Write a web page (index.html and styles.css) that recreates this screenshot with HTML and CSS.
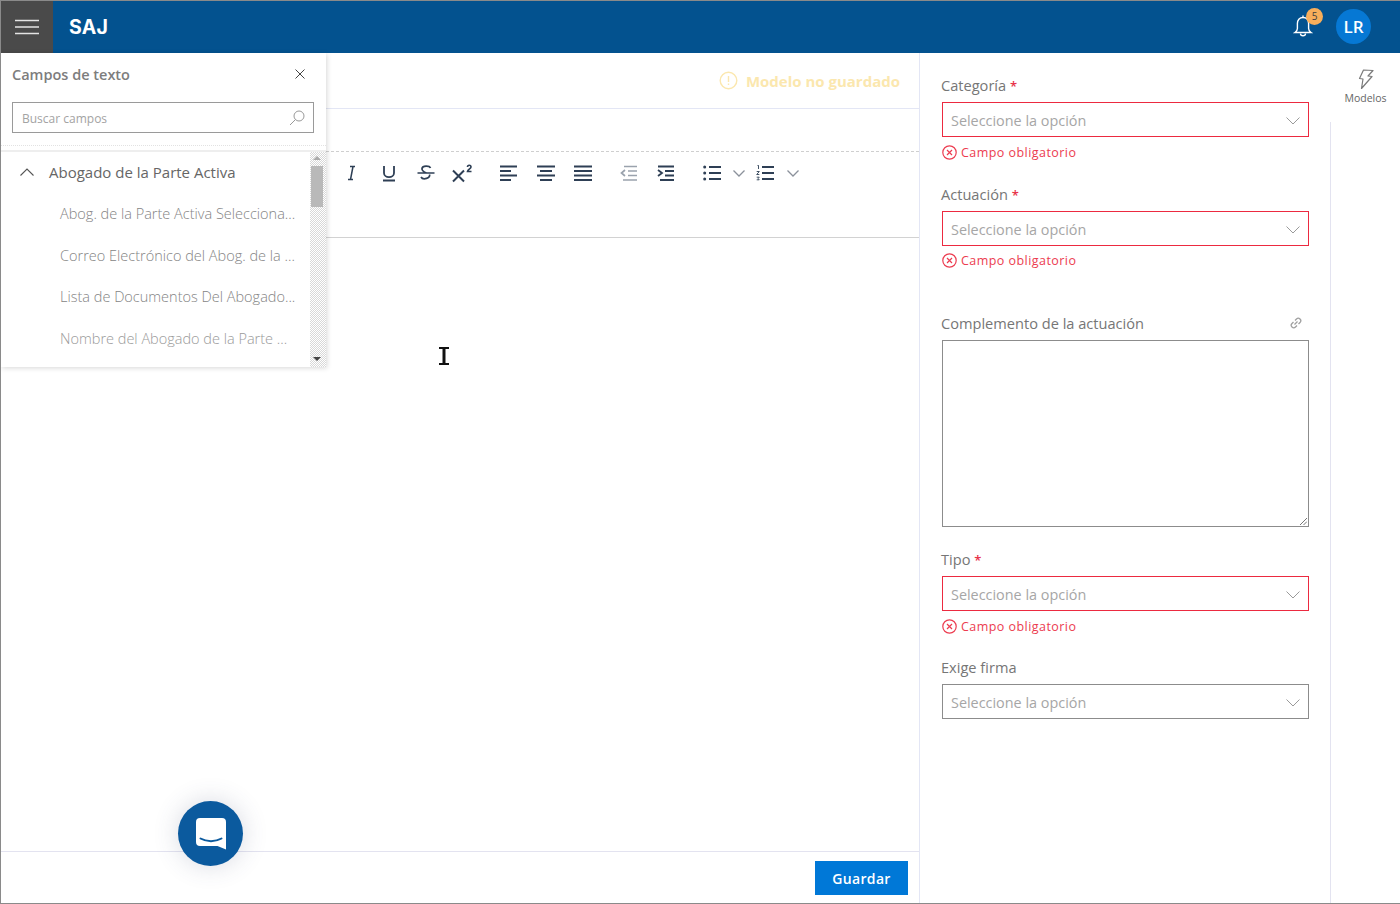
FILE: index.html
```html
<!DOCTYPE html>
<html lang="es">
<head>
<meta charset="utf-8">
<title>SAJ</title>
<link rel="stylesheet" href="styles.css">
</head>
<body>
<div class="app">
  <header class="topbar">
    <button class="menu-btn" aria-label="Menú">
      <svg width="24" height="16" viewBox="0 0 24 16"><path d="M0 1.500h24M0 8h24M0 14.500h24" stroke="#e4e4e4" stroke-width="1.600" fill="none"/></svg>
    </button>
    <div class="logo">SAJ</div>
    <div class="topbar-right">
      <div class="bell">
        <svg width="20" height="24" viewBox="0 0 20 24" fill="none" stroke="#fff" stroke-width="1.400"><path d="M10 1.500v2M10 3.500c-3.600 0-5.600 2.600-5.600 6v5c0 1.500-1 3-2.400 4h16c-1.400-1-2.400-2.500-2.400-4v-5c0-3.400-2-6-5.600-6z"/><path d="M7.500 19.500c0 3 5 3 5 0"/></svg>
        <span class="badge">5</span>
      </div>
      <div class="avatar">LR</div>
    </div>
  </header>

  <main class="main">
    <section class="editor">
      <div class="status">
        <svg width="19" height="19" viewBox="0 0 19 19" fill="none" stroke="#fbe7ae" stroke-width="1.400"><circle cx="9.500" cy="9.500" r="8.300"/><path d="M9.500 5v6M9.500 12.500v1.500"/></svg>
        <span>Modelo no guardado</span>
      </div>
      <div class="blank-row"></div>
      <div class="toolbar">
        <div class="tool"><svg width="20" height="20" viewBox="0 0 20 20"><path d="M8 3.500h5M6 16.500h5M11 3.500l-2.500 13" stroke="#2e3f55" stroke-width="1.500" fill="none"/></svg></div>
        <div class="tool"><svg width="20" height="20" viewBox="0 0 20 20" fill="none" stroke="#2e3f55" stroke-width="1.800"><path d="M5 3v7c0 5.500 10 5.500 10 0V3M4 17.500h12"/></svg></div>
        <div class="tool"><svg width="20" height="20" viewBox="0 0 20 20" fill="none" stroke="#2e3f55" stroke-width="1.700"><path d="M14.500 5c-1-2.500-8-2.800-8.500.5-.3 2 2 3.500 4.500 4.500M13.500 11.500c1.500 3.500-6.500 6-8.500 2.500M1.500 10h17"/></svg></div>
        <div class="tool"><svg width="24" height="20" viewBox="0 0 24 20" fill="none" stroke="#2e3f55"><path d="M2 7.500l11 11M13 7.500l-11 11" stroke-width="2"/><path d="M16.500 4c0-2.300 3.500-2.300 3.500 0 0 1.400-3 2.400-3.500 4.500h4" stroke-width="1.600"/></svg></div>
        <div class="tool-gap"></div>
        <div class="tool"><svg width="18" height="16" viewBox="0 0 18 16"><path d="M0 1.500h17M0 6h11M0 10.500h17M0 15h11" stroke="#2e3f55" stroke-width="1.800"/></svg></div>
        <div class="tool"><svg width="18" height="16" viewBox="0 0 18 16"><path d="M0 1.500h18M3 6h12M0 10.500h18M3 15h12" stroke="#2e3f55" stroke-width="1.800"/></svg></div>
        <div class="tool"><svg width="18" height="16" viewBox="0 0 18 16"><path d="M0 1.500h18M0 6h18M0 10.500h18M0 15h18" stroke="#2e3f55" stroke-width="1.800"/></svg></div>
        <div class="tool-gap"></div>
        <div class="tool"><svg width="18" height="16" viewBox="0 0 18 16" fill="none" stroke="#9aa2ad" stroke-width="1.700"><path d="M4 1.500h13M8 6h9M8 10.500h9M3 15h14M5 5L1.500 8 5 11"/></svg></div>
        <div class="tool"><svg width="18" height="16" viewBox="0 0 18 16" fill="none" stroke="#2e3f55" stroke-width="1.800"><path d="M1 1.500h16M8 6h9M8 10.500h9M3 15h14M1 5l4 3-4 3"/></svg></div>
        <div class="tool-gap"></div>
        <div class="tool"><svg width="18" height="16" viewBox="0 0 18 16"><path d="M6 2h12M6 8h12M6 14h12" stroke="#2e3f55" stroke-width="1.800"/><circle cx="1.700" cy="2" r="1.500" fill="#2e3f55"/><circle cx="1.700" cy="8" r="1.500" fill="#2e3f55"/><circle cx="1.700" cy="14" r="1.500" fill="#2e3f55"/></svg></div>
        <div class="tool-caret"><svg width="12" height="7" viewBox="0 0 12 7"><path d="M.5.500L6 6 11.500.5" stroke="#8b919b" stroke-width="1.300" fill="none"/></svg></div>
        <div class="tool"><svg width="18" height="16" viewBox="0 0 18 16" fill="none"><path d="M6 2h12M6 8h12M6 14h12" stroke="#2e3f55" stroke-width="1.800"/><path d="M1.500.5l1-.2v3.700M.7 6.500h2.600L.7 9.500h2.600M.7 12.200h2.500l-1 1.300 1 1.300H.7" stroke="#2e3f55" stroke-width=".9"/></svg></div>
        <div class="tool-caret tool-caret--last"><svg width="12" height="7" viewBox="0 0 12 7"><path d="M.5.500L6 6 11.500.5" stroke="#8b919b" stroke-width="1.300" fill="none"/></svg></div>
      </div>
      <div class="content"></div>
      <div class="footer"><button class="save">Guardar</button></div>
    </section>

    <aside class="side">
      <div class="field field--first">
        <label>Categoría <b>*</b></label>
        <div class="select select--error"><span>Seleccione la opción</span><svg width="14" height="8" viewBox="0 0 14 8"><path d="M.5.500L7 7 13.500.5" stroke="#9a9a9a" fill="none"/></svg></div>
        <div class="error"><svg width="15" height="15" viewBox="0 0 15 15" fill="none" stroke="#ec3c50" stroke-width="1.200"><circle cx="7.500" cy="7.500" r="6.700"/><path d="M5 5l5 5M10 5l-5 5"/></svg><span>Campo obligatorio</span></div>
      </div>
      <div class="field field--second">
        <label>Actuación <b>*</b></label>
        <div class="select select--error"><span>Seleccione la opción</span><svg width="14" height="8" viewBox="0 0 14 8"><path d="M.5.500L7 7 13.500.5" stroke="#9a9a9a" fill="none"/></svg></div>
        <div class="error"><svg width="15" height="15" viewBox="0 0 15 15" fill="none" stroke="#ec3c50" stroke-width="1.200"><circle cx="7.500" cy="7.500" r="6.700"/><path d="M5 5l5 5M10 5l-5 5"/></svg><span>Campo obligatorio</span></div>
      </div>
      <div class="field">
        <label class="label-row">Complemento de la actuación
          <svg width="12" height="12" viewBox="0 0 12 12" fill="none" stroke="#a0a0a0" stroke-width="1.300"><path d="M5 3.500l1.500-1.500a2 2 0 0 1 3.500 3.500L8.500 7M7 8.500L5.500 10A2 2 0 0 1 2 6.500L3.500 5M4.500 7.500l3-3"/></svg>
        </label>
        <div class="textarea">
          <svg class="grip" width="8" height="8" viewBox="0 0 8 8"><path d="M1 8l7-7M4.500 8L8 4.500" stroke="#777" fill="none"/></svg>
        </div>
      </div>
      <div class="field">
        <label>Tipo <b>*</b></label>
        <div class="select select--error"><span>Seleccione la opción</span><svg width="14" height="8" viewBox="0 0 14 8"><path d="M.5.500L7 7 13.500.5" stroke="#9a9a9a" fill="none"/></svg></div>
        <div class="error"><svg width="15" height="15" viewBox="0 0 15 15" fill="none" stroke="#ec3c50" stroke-width="1.200"><circle cx="7.500" cy="7.500" r="6.700"/><path d="M5 5l5 5M10 5l-5 5"/></svg><span>Campo obligatorio</span></div>
      </div>
      <div class="field">
        <label>Exige firma</label>
        <div class="select"><span>Seleccione la opción</span><svg width="14" height="8" viewBox="0 0 14 8"><path d="M.5.500L7 7 13.500.5" stroke="#9a9a9a" fill="none"/></svg></div>
      </div>
    </aside>

    <nav class="rail">
      <div class="rail-head">
        <svg width="18" height="21" viewBox="0 0 18 21" fill="none" stroke="#7a7a7a" stroke-width="1.200" stroke-linejoin="round"><path d="M6.500 1L2.500 9.500l3.500.5L4.500 19.500 15 7.500l-4-.5 5-5.500z"/></svg>
        <span>Modelos</span>
      </div>
      <div class="rail-body"></div>
    </nav>
  </main>

  <section class="fields-panel">
    <div class="panel-head">
      <h2>Campos de texto</h2>
      <svg width="10" height="10" viewBox="0 0 10 10"><path d="M.5.500l9 9M9.500.500l-9 9" stroke="#444" fill="none"/></svg>
    </div>
    <div class="search">
      <span>Buscar campos</span>
      <svg width="16" height="16" viewBox="0 0 16 16" fill="none" stroke="#999"><circle cx="10" cy="6" r="5"/><path d="M6.500 9.500L1 15"/></svg>
    </div>
    <div class="panel-divider"></div>
    <div class="panel-list">
      <div class="list-body">
        <div class="group">
          <svg width="14" height="8" viewBox="0 0 14 8"><path d="M.5 7.500L7 1l6.500 6.500" stroke="#555" stroke-width="1.100" fill="none"/></svg>
          <span>Abogado de la Parte Activa</span>
        </div>
        <div class="item">Abog. de la Parte Activa Selecciona...</div>
        <div class="item">Correo Electrónico del Abog. de la ...</div>
        <div class="item">Lista de Documentos Del Abogado...</div>
        <div class="item item--faded">Nombre del Abogado de la Parte ...</div>
      </div>
      <div class="scrollbar">
        <span class="arrow arrow--up"></span>
        <span class="thumb"></span>
        <span class="arrow arrow--down"></span>
      </div>
    </div>
  </section>

  <svg class="ibeam" width="10" height="18" viewBox="0 0 10 18"><path d="M0 1h10M0 17h10M5 1v16" stroke="#111" stroke-width="2" fill="none"/><path d="M5 2v14" stroke="#111" stroke-width="3"/></svg>

  <button class="chat" aria-label="Chat">
    <svg width="32" height="34" viewBox="0 0 32 34"><path d="M5 1h22a4 4 0 0 1 4 4v27.500L22.500 29H5a4 4 0 0 1-4-4V5a4 4 0 0 1 4-4z" fill="#fff"/><path d="M5.500 21.500c6 3.500 15 3.500 21 0" stroke="#0b5a9e" stroke-width="2" stroke-linecap="round" fill="none"/></svg>
  </button>
</div>
</body>
</html>
```

FILE: styles.css
```css
* { box-sizing: border-box; }
html, body { margin: 0; padding: 0; background: #fff; }
body { font-family: "Open Sans", "Noto Sans", sans-serif; color: #777; overflow: hidden; }
button { font-family: inherit; border: 0; padding: 0; cursor: pointer; }

.app {
  position: relative;
  width: 1400px;
  height: 904px;
  display: flex;
  flex-direction: column;
  border-top: 1px solid #8a8a8a;
  border-left: 1px solid #8a8a8a;
  border-bottom: 1px solid #8a8a8a;
  overflow: hidden;
}

/* top bar */
.topbar { height: 52px; flex: none; display: flex; align-items: center; background: #03528f; }
.menu-btn { width: 52px; height: 52px; background: #4a4a4a; display: flex; align-items: center; justify-content: center; }
.logo { margin: 0 0 1px 16px; color: #fff; font: 700 19.500px Inter, "Open Sans", sans-serif; letter-spacing: .2px; }
.topbar-right { margin-left: auto; display: flex; align-items: center; padding: 0 29px 2px 0; gap: 23px; }
.bell { position: relative; width: 20px; height: 24px; display: flex; }
.badge {
  position: absolute; left: 13px; top: -6px;
  width: 17px; height: 17px; border-radius: 50%;
  background: #f7ae5b; color: #3d3d3d;
  font-size: 10px; line-height: 17px; text-align: center;
}
.avatar {
  width: 35px; height: 35px; border-radius: 50%;
  background: #0678d4; color: #fff;
  font-size: 17px; font-weight: 600; line-height: 35px; text-align: center;
}

.main { flex: 1; display: flex; min-height: 0; }

/* editor */
.editor { width: 919px; flex: none; display: flex; flex-direction: column; border-right: 1px solid #e3e6f5; }
.status {
  height: 56px; flex: none;
  display: flex; align-items: center; justify-content: flex-end; gap: 8px;
  padding: 0 19px 0 0;
  border-bottom: 1px solid #e3e6f5;
  color: #fbe7ae; font-size: 15px; font-weight: 700;
}
.blank-row { height: 43px; flex: none; border-bottom: 1px dashed #cfcfcf; }
.toolbar {
  height: 86px; flex: none;
  display: flex; align-items: flex-start;
  padding: 3px 0 0 332.500px;
  border-bottom: 1px solid #d2d2d2;
}
.tool { width: 37px; height: 36px; flex: none; display: flex; align-items: center; justify-content: center; }
.tool-gap { width: 9px; flex: none; }
.tool-caret { width: 16px; height: 36px; flex: none; display: flex; align-items: center; justify-content: center; }
.tool-caret--last { width: 18px; }
.content { flex: 1; }
.footer {
  height: 52px; flex: none;
  display: flex; align-items: flex-start; justify-content: flex-end;
  padding: 9px 11px 0 0;
  border-top: 1px solid #e3e3f0;
}
.save { width: 93px; height: 34px; background: #0078d7; color: #fff; font-size: 14px; font-weight: 600; letter-spacing: .35px; }

/* side form */
.side { width: 410px; flex: none; padding: 22px 21px 0 21px; display: flex; flex-direction: column; }
.field { display: flex; flex-direction: column; margin-bottom: 22px; }
.field--first { margin-bottom: 23px; }
.field--second { margin-bottom: 44px; }
.field--second label { margin-bottom: 8px; }
.field--second .error { margin-top: 5px; }
.field label { height: 20px; font-size: 14.600px; line-height: 20px; color: #767676; margin-bottom: 7px; }
.field label b { color: #e8334a; font-weight: 600; font-size: 13px; }
.label-row { display: flex; align-items: center; justify-content: space-between; padding-right: 7px; }
.select {
  height: 35px; margin-left: 1px; border: 1px solid #8c8c8c;
  display: flex; align-items: center; justify-content: space-between;
  padding: 2px 8px 0 8px;
  font-size: 14.400px; color: #a6a6a6;
}
.select--error { border-color: #ec2a40; }
.error { margin-top: 6px; height: 18px; padding-left: 1px; display: flex; align-items: center; gap: 4px; color: #ec3c50; font-size: 12.500px; letter-spacing: .45px; }
.textarea { position: relative; height: 187px; margin-left: 1px; border: 1px solid #8c8c8c; }
.grip { position: absolute; right: 1px; bottom: 1px; }

/* right rail */
.rail { flex: 1; display: flex; flex-direction: column; }
.rail-head { height: 69px; display: flex; flex-direction: column; align-items: center; padding: 16px 0 0 1px; color: #666; font-size: 10.500px; gap: 1px; }
.rail-body { flex: 1; border-left: 1px solid #e3e3f0; }

/* campos de texto overlay */
.fields-panel {
  position: absolute; left: 0; top: 52px;
  width: 325px; height: 314px;
  background: #fff;
  box-shadow: 1px 1px 5px rgba(0,0,0,.16);
  display: flex; flex-direction: column;
}
.panel-head { height: 47px; flex: none; display: flex; align-items: center; justify-content: space-between; padding: 0 21px 5px 11px; }
.panel-head h2 { margin: 0; font-size: 14.500px; font-weight: 600; color: #7d7d7d; }
.search {
  margin: 2px 12px 0 11px; height: 31px; flex: none;
  border: 1px solid #9a9a9a;
  display: flex; align-items: center; justify-content: space-between;
  padding: 1px 8px 0 9px;
  font-size: 12px; color: #a3a3a3;
}
.panel-divider { margin-top: 12px; height: 5px; flex: none; border-top: 1px dotted #e2e2e2; }
.panel-list { flex: 1; min-height: 0; display: flex; border-top: 2px solid #eee; }
.list-body { width: 309px; flex: none; overflow: hidden; }
.group { height: 41px; display: flex; align-items: center; gap: 15px; padding: 0 0 2px 19px; font-size: 15px; color: #666; }
.item {
  height: 41.500px; line-height: 41.500px; padding: 0 0 0 59px;
  font-size: 14.500px; color: #848484; font-weight: 300;
  white-space: nowrap;
}
.item--faded { color: #9a9a9a; }
.scrollbar {
  position: relative; flex: 1;
  background: repeating-conic-gradient(#d8d8d8 0 25%, #fff 0 50%) 0 0 / 2px 2px;
}
.thumb { position: absolute; left: 1px; right: 3px; top: 14px; height: 41px; background: #b9b9b9; }
.arrow { position: absolute; left: 3px; width: 0; height: 0; border-left: 4px solid transparent; border-right: 4px solid transparent; }
.arrow--up { top: 4px; border-bottom: 4px solid #aaa; }
.arrow--down { bottom: 6px; border-top: 4px solid #444; }

/* floating */
.ibeam { position: absolute; left: 438px; top: 346px; }
.chat {
  position: absolute; left: 177px; top: 800px;
  width: 65px; height: 65px; border-radius: 50%;
  background: #0b5a9e;
  box-shadow: 0 0 26px rgba(60,70,110,.2);
  display: flex; align-items: center; justify-content: center;
  padding-top: 1px;
}
```
